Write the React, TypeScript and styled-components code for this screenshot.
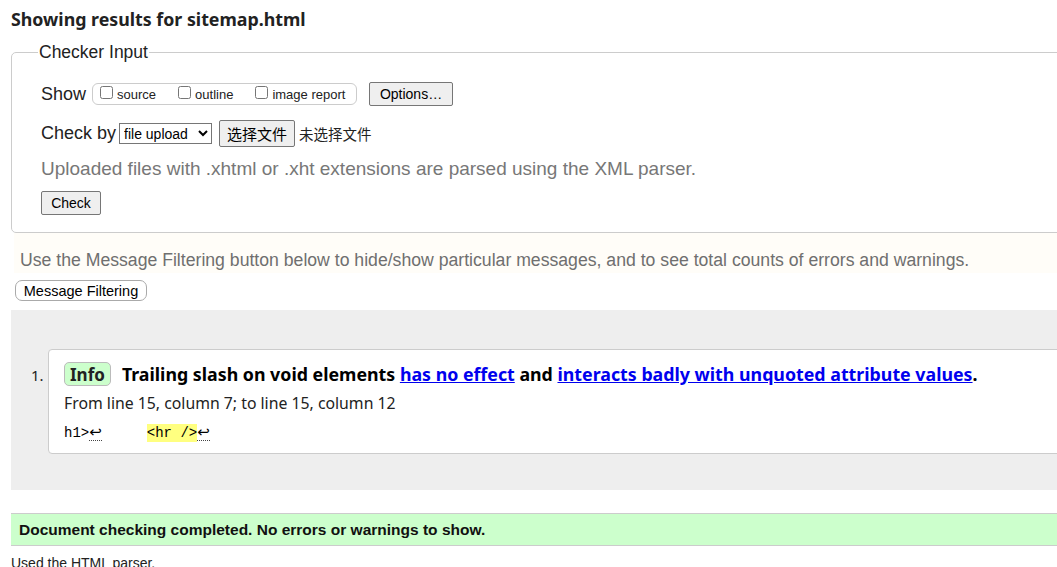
import React from 'react'
import styled, { createGlobalStyle } from 'styled-components';

const GlobalStyle = createGlobalStyle`
    html, body {
        margin: 0;
        padding: 0;
        background: #fff;
        overflow: hidden;
    }
    body {
        font-family: "Liberation Sans", Arial, sans-serif;
        color: #222;
    }
`;

const App: React.FC = () => {
  return (
    <>
      <GlobalStyle />
      <Page>
        <Title>Showing results for sitemap.html</Title>

        <Fieldset>
            <Legend>Checker Input</Legend>
            <ShowRow>
                <RowLabel>Show</RowLabel>
                <OptionBox>
                    <Opt><input type="checkbox" />source</Opt>
                    <Opt><input type="checkbox" />outline</Opt>
                    <Opt><input type="checkbox" />image report</Opt>
                </OptionBox>
                <GrayButton $w={84} $h={24}>Options…</GrayButton>
            </ShowRow>
            <CheckRow>
                <RowLabel>Check by</RowLabel>
                <Select defaultValue="file">
                    <option value="file">file upload</option>
                    <option value="address">address</option>
                    <option value="text">text input</option>
                </Select>
                <FileButton>选择文件</FileButton>
                <NoFile>未选择文件</NoFile>
            </CheckRow>
            <Hint>Uploaded files with .xhtml or .xht extensions are parsed using the XML parser.</Hint>
            <GrayButton $w={60} $h={24}>Check</GrayButton>
        </Fieldset>

        <Notice>Use the Message Filtering button below to hide/show particular messages, and to see total counts of errors and warnings.</Notice>
        <FilterButton>Message Filtering</FilterButton>

        <Results>
            <Item>
                <Num>1.</Num>
                <Card>
                    <MsgLine>
                        <Badge>Info</Badge>
                        <MsgText>
                            Trailing slash on void elements <a href="#">has no effect</a> and <a href="#">interacts badly with unquoted attribute values</a>.
                        </MsgText>
                    </MsgLine>
                    <Location>From line 15, column 7; to line 15, column 12</Location>
                    <Extract>
                        h1&gt;<Lf>↩</Lf><Gap /><Mark>&lt;hr /&gt;</Mark><Lf>↩</Lf>
                    </Extract>
                </Card>
            </Item>
        </Results>

        <Success>Document checking completed. No errors or warnings to show.</Success>
        <Footnote>Used the HTML parser.</Footnote>
      </Page>
    </>
  )
}

export default App;

const Page = styled.div`
    width: 1100px;
    padding-left: 11px;
`;
const Title = styled.h2`
    margin: 0;
    padding-top: 7px;
    font-family: "Noto Sans", "Open Sans", sans-serif;
    font-size: 17.8px;
    font-weight: 700;
    line-height: 24px;
    color: #222;
`;
const Fieldset = styled.fieldset`
    margin: 10px 0 0 0;
    padding: 0 0 17px 29px;
    border: 1px solid #ccc;
    border-radius: 5px;
    min-width: 0;
    display: flex;
    flex-direction: column;
    align-items: flex-start;
`;
const Legend = styled.legend`
    margin-left: -3px;
    padding: 0 1px;
    font-size: 17.5px;
    line-height: 22px;
    color: #222;
`;
const ShowRow = styled.div`
    margin-top: 19px;
    height: 24px;
    display: flex;
    align-items: center;
`;
const CheckRow = styled.div`
    margin-top: 14px;
    height: 27px;
    display: flex;
    align-items: center;
`;
const RowLabel = styled.span`
    font-size: 18px;
    color: #222;
    margin-right: 4px;
`;
const OptionBox = styled.div`
    height: 22px;
    width: 265px;
    box-sizing: border-box;
    border: 1px solid #ccc;
    border-radius: 6px;
    padding: 0 0 0 7px;
    margin-left: 2px;
    display: flex;
    align-items: center;
    gap: 22px;
    margin-right: 12px;
`;
const Opt = styled.label`
    display: flex;
    align-items: center;
    font-size: 13px;
    color: #222;
    input {
        margin: 0 4px 4px 0;
        width: 13px;
        height: 13px;
    }
`;
const GrayButton = styled.button<{ $w: number; $h: number }>`
    width: ${p => p.$w}px;
    height: ${p => p.$h}px;
    padding: 0;
    font-family: "Liberation Sans", Arial, sans-serif;
    font-size: 14px;
    color: #000;
    background: #efefef;
    border: 1px solid #767676;
    border-radius: 2px;
`;
const Select = styled.select`
    width: 93px;
    height: 21px;
    margin-left: -1px;
    font-family: "Liberation Sans", Arial, sans-serif;
    font-size: 14px;
    color: #000;
    border: 1px solid #767676;
    border-radius: 0;
    background: #fff;
    margin-right: 7px;
`;
const FileButton = styled.button`
    width: 76px;
    height: 27px;
    padding: 0;
    font-family: "Noto Sans CJK SC", sans-serif;
    font-size: 15px;
    color: #000;
    background: #efefef;
    border: 1px solid #767676;
    border-radius: 2px;
    margin-right: 4px;
`;
const NoFile = styled.span`
    font-family: "Noto Sans CJK SC", sans-serif;
    font-size: 14.5px;
    color: #222;
`;
const Hint = styled.p`
    margin: 11px 0 11px;
    font-size: 19px;
    line-height: 22px;
    color: #777;
`;
const Notice = styled.p`
    margin: 0 0 0 3px;
    padding: 16px 6px 2px;
    background: #fffdf8;
    font-size: 17.65px;
    line-height: 22px;
    color: #6f6f6f;
`;
const FilterButton = styled.button`
    display: block;
    margin: 7px 0 0 4px;
    width: 132px;
    height: 21px;
    padding: 0;
    font-family: "Liberation Sans", Arial, sans-serif;
    font-size: 14.5px;
    color: #000;
    background: #fff;
    border: 1px solid #aaa;
    border-radius: 7px;
`;
const Results = styled.ol`
    margin: 9px 0 0 0;
    padding: 39px 0 36px 21px;
    list-style: none;
    background: #eee;
`;
const Item = styled.li`
    display: flex;
    align-items: flex-start;
`;
const Num = styled.span`
    width: 17px;
    padding-top: 16px;
    margin-left: -1px;
    font-family: "Noto Sans", sans-serif;
    font-size: 15px;
    color: #222;
`;
const Card = styled.div`
    flex: 1;
    background: #fff;
    border: 1px solid #ccc;
    border-radius: 4px;
    padding: 12px 0 0 15px;
    box-sizing: border-box;
    height: 105px;
`;
const MsgLine = styled.div`
    display: flex;
    align-items: center;
    height: 24px;
`;
const Badge = styled.span`
    height: 24px;
    box-sizing: border-box;
    padding: 0 5px;
    display: flex;
    align-items: center;
    background: #ccffcc;
    border: 1px solid #bbb;
    border-radius: 5px;
    font-family: "Noto Sans", sans-serif;
    font-size: 17px;
    font-weight: 700;
    color: #222;
    margin-right: 11px;
`;
const MsgText = styled.span`
    font-family: "Noto Sans", sans-serif;
    font-size: 17.8px;
    font-weight: 700;
    color: #000;
    white-space: nowrap;
    a {
        color: #0000ee;
        text-decoration: underline;
    }
`;
const Location = styled.p`
    margin: 6px 0 0;
    font-family: "Noto Sans", sans-serif;
    font-size: 15.8px;
    line-height: 22px;
    color: #222;
`;
const Extract = styled.code`
    display: flex;
    align-items: center;
    margin-top: 10px;
    font-family: "Liberation Mono", monospace;
    font-size: 14px;
    line-height: 18px;
    color: #000;
`;
const Lf = styled.span`
    font-family: "DejaVu Sans", sans-serif;
    font-size: 15px;
    color: #000;
    border-bottom: 1px dotted #444;
    line-height: 15px;
`;
const Gap = styled.span`
    width: 45px;
`;
const Mark = styled.span`
    background: #ffff80;
`;
const Success = styled.p`
    margin: 23px 0 0;
    height: 31px;
    padding-left: 8px;
    display: flex;
    align-items: center;
    background: #ccffcc;
    border-top: 1px solid #ccc;
    border-bottom: 1px solid #ccc;
    font-size: 15.5px;
    font-weight: 700;
    color: #111;
`;
const Footnote = styled.p`
    margin: 9px 0 0;
    font-size: 14px;
    color: #222;
`;
